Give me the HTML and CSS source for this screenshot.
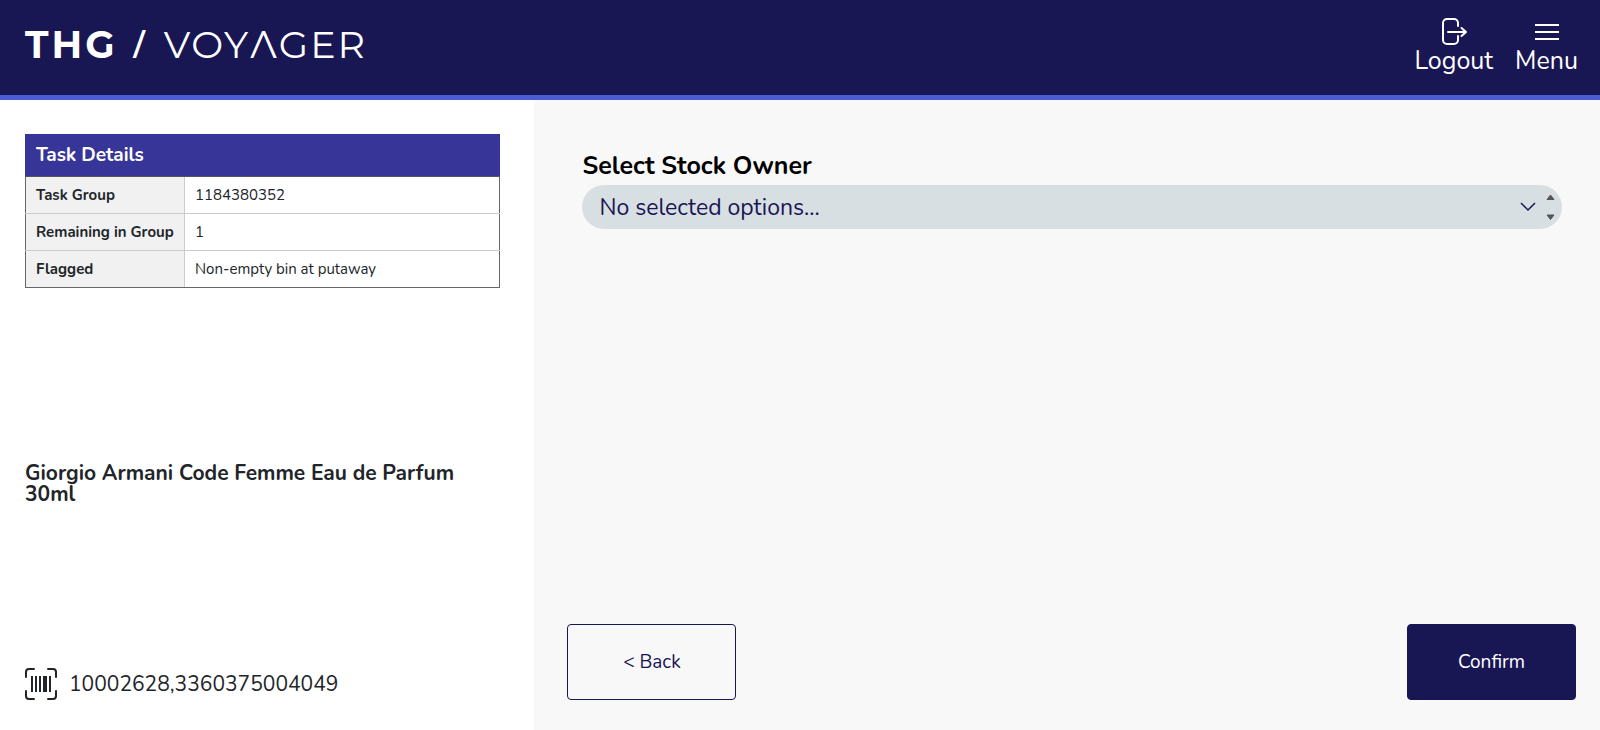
FILE: index.html
```html
<!DOCTYPE html>
<html lang="en">
<head>
    <meta charset="UTF-8">
    <meta name="viewport" content="width=device-width, initial-scale=1.0">
    <title>Voyager</title>
    <link rel="stylesheet" href="styles.css">
</head>

<body>
    <header class="header">
        <a href="#" class="logo">
            <span class="logo-brand">THG</span>
            <span class="logo-slash">/</span>
            <span class="logo-product">VOYΛGER</span>
        </a>

        <nav class="header-nav">
            <button type="button" class="nav-button">
                <svg class="nav-icon" viewBox="0 0 26 28" fill="none" stroke="currentColor" stroke-width="2" stroke-linecap="round" stroke-linejoin="round">
                    <path d="M17 9V6a4 4 0 0 0-4-4H6a4 4 0 0 0-4 4v17a4 4 0 0 0 4 4h7a4 4 0 0 0 4-4V19"/>
                    <path d="M7 15h18M20.500 11l4.500 4-4.500 4"/>
                </svg>
                Logout
            </button>
            <button type="button" class="nav-button">
                <svg class="nav-icon" viewBox="0 0 26 28" fill="none" stroke="currentColor" stroke-width="2">
                    <path d="M1 8h24M1 15h24M1 22h24"/>
                </svg>
                Menu
            </button>
        </nav>
    </header>

    <div class="content">
        <aside class="task-panel">
            <table class="task-table">
                <thead>
                    <tr><th colspan="2">Task Details</th></tr>
                </thead>
                <tbody>
                    <tr>
                        <th scope="row">Task Group</th>
                        <td>1184380352</td>
                    </tr>
                    <tr>
                        <th scope="row">Remaining in Group</th>
                        <td>1</td>
                    </tr>
                    <tr>
                        <th scope="row">Flagged</th>
                        <td>Non-empty bin at putaway</td>
                    </tr>
                </tbody>
            </table>

            <h2 class="product-name">Giorgio Armani Code Femme Eau de Parfum 30ml</h2>

            <div class="barcode">
                <svg class="barcode-icon" viewBox="0 0 32 32" fill="none" stroke="currentColor" stroke-width="2" stroke-linecap="round">
                    <path d="M1 9V4a3 3 0 0 1 3-3h5M23 1h5a3 3 0 0 1 3 3v5M31 23v5a3 3 0 0 1-3 3h-5M9 31H4a3 3 0 0 1-3-3v-5"/>
                    <path d="M7 8v16M11 8v16M15 8v16M25 8v16" stroke-width="2" stroke-linecap="butt"/>
                    <path d="M20 8v16" stroke-width="4" stroke-linecap="butt"/>
                </svg>
                <span>10002628,3360375004049</span>
            </div>
        </aside>

        <main class="main-panel">
            <div class="field">
                <label for="stockOwner">Select Stock Owner</label>
                <div class="select-wrapper">
                    <select id="stockOwner">
                        <option>No selected options...</option>
                    </select>
                    <svg class="select-icons" viewBox="0 0 36 32">
                        <path d="M2 12l7 7 7-7" fill="none" stroke="#191654" stroke-width="1.500"/>
                        <path d="M28 8.500l3.500-4.500 3.500 4.500zM28 24l3.500 4.500 3.500-4.500z" fill="#555" stroke="#555" stroke-linejoin="round"/>
                    </svg>
                </div>
            </div>

            <div class="actions">
                <button type="button" class="btn btn-back">&lt; Back</button>
                <button type="button" class="btn btn-confirm">Confirm</button>
            </div>
        </main>
    </div>
</body>
</html>
```

FILE: styles.css
```css
* {
    box-sizing: border-box;
}

body {
    margin: 0;
    min-height: 100vh;
    display: flex;
    flex-direction: column;
    font-family: Nunito, Lato, sans-serif;
    color: #212529;
    background-color: #f8f8f8;
}

button,
select {
    font-family: inherit;
    cursor: pointer;
}

/* Header */
.header {
    display: flex;
    justify-content: space-between;
    align-items: center;
    padding: 17px 22px 18px 25px;
    background-color: #191654;
    border-bottom: 5px solid #4a5bd4;
}

.logo {
    display: flex;
    align-items: center;
    gap: 16px;
    margin-bottom: 4px;
    color: #fff;
    font-family: Montserrat, Lato, sans-serif;
    font-size: 38px;
    line-height: 44px;
    letter-spacing: 3px;
    text-decoration: none;
}

.logo-brand {
    font-weight: 700;
}

.logo-slash {
    font-size: 30px;
    font-weight: 600;
}

.logo-product {
    font-weight: 400;
    letter-spacing: 2px;
}

.header-nav {
    display: flex;
    gap: 22px;
}

.nav-button {
    display: flex;
    flex-direction: column;
    align-items: center;
    padding: 0;
    border: none;
    background: none;
    color: #fff;
    font-size: 25px;
    line-height: 32px;
}

.nav-icon {
    width: 26px;
    height: 28px;
}

/* Layout */
.content {
    display: flex;
    flex: 1;
}

.task-panel {
    width: 33.4%;
    display: flex;
    flex-direction: column;
    justify-content: space-between;
    padding: 34px 34px 30px 25px;
    background-color: #fff;
}

.main-panel {
    flex: 1;
    display: flex;
    flex-direction: column;
    justify-content: space-between;
    padding: 49px 24px 30px 33px;
}

/* Task details */
.task-table {
    width: 100%;
    border-collapse: collapse;
    border: 1px solid #666;
    font-size: 15px;
    line-height: 20px;
    text-align: left;
}

.task-table thead th {
    padding: 9px 10px;
    background-color: #383598;
    color: #fff;
    font-size: 19px;
    line-height: 23px;
    border: 1px solid #383598;
    border-bottom-color: #555;
}

.task-table tbody th,
.task-table tbody td {
    padding: 8px 10px;
    border-bottom: 1px solid #ccc;
}

.task-table tbody tr:last-child th,
.task-table tbody tr:last-child td {
    border-bottom-color: #666;
}

.task-table tbody th {
    width: 159px;
    background-color: #f1f1f1;
    border-right: 1px solid #ccc;
}

.product-name {
    margin: 12px 0 0;
    font-size: 21px;
    line-height: 21px;
}

.barcode {
    display: flex;
    align-items: center;
    gap: 12px;
    font-size: 21px;
}

.barcode-icon {
    width: 32px;
    height: 32px;
}

/* Stock owner */
.field {
    padding: 0 14px 0 15px;
}

.field label {
    display: block;
    margin-bottom: 2px;
    color: #000;
    font-size: 25px;
    font-weight: 700;
    line-height: 34px;
}

.select-wrapper {
    position: relative;
}

.select-wrapper select {
    display: block;
    width: 100%;
    height: 44px;
    padding: 0 60px 0 17px;
    border: none;
    border-radius: 22px;
    appearance: none;
    background-color: #d8dfe2;
    color: #191654;
    font-size: 23px;
}

.select-icons {
    position: absolute;
    top: 6px;
    right: 7px;
    width: 36px;
    height: 32px;
    pointer-events: none;
}

/* Buttons */
.actions {
    display: flex;
    justify-content: space-between;
}

.btn {
    width: 169px;
    height: 76px;
    border: 1px solid #191654;
    border-radius: 4px;
    font-size: 19px;
}

.btn-back {
    background-color: transparent;
    color: #191654;
}

.btn-confirm {
    background-color: #191654;
    color: #fff;
}
```
